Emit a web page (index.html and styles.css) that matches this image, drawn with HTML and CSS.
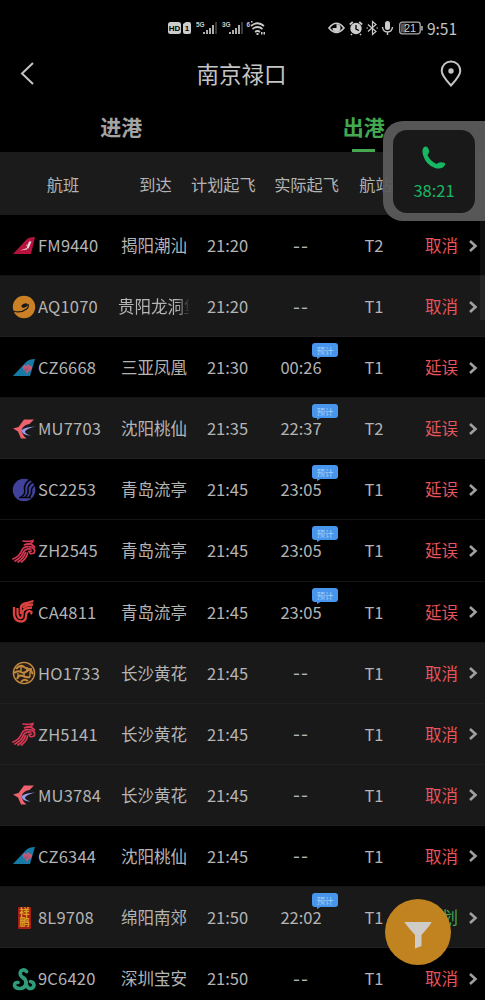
FILE: index.html
```
<!DOCTYPE html>
<html lang="zh-CN">
<head>
    <meta charset="utf-8">
    <title>南京禄口</title>
    <link rel="stylesheet" href="styles.css">
</head>
<body>
    <!-- airline logos -->
    <svg class="defs">
        <symbol id="fm" viewBox="0 0 24 24">
            <path d="M1 20L15 5Q17 3 23 3L19 20Z" fill="#b5123e"/>
            <path d="M17 7.500h2.500l-3 7h-2zM8 16.500l7-2.500v1.500z" fill="#ecd8de"/>
            <path d="M14 11.500l4-1" stroke="#ecd8de" stroke-width=".7"/>
        </symbol>
        <symbol id="aq" viewBox="0 0 24 24">
            <circle cx="12" cy="12" r="11.200" fill="#cc8025"/>
            <ellipse cx="12.500" cy="10.500" rx="3.200" ry="1.800" transform="rotate(-25 12.500 10.500)" fill="#191919"/>
            <path d="M1 16Q9 18.500 14.500 14Q17 12 16 9" fill="none" stroke="#191919" stroke-width="1.300"/>
        </symbol>
        <symbol id="cz" viewBox="0 0 24 24">
            <path d="M1 20L14 6Q17 3 23 3L18 20Z" fill="#1779a5"/>
            <path d="M14.500 18l-.5-3-2.500-1-1-3 2-2 2 1 1.500-2 1.500 2 2-.5.500 2.500-1.500 2.500-2 1z" fill="#c55d78"/>
            <path d="M13 11l1.500 3 2.500-3.500M12 13l3 1.500 3-2" fill="none" stroke="#804a72" stroke-width=".6"/>
        </symbol>
        <symbol id="mu" viewBox="0 0 24 24">
            <path d="M22 2.500H12L6.500 10L1 11.500L6 14.500L9 21.500H14.500Q8 16 10.500 11Q13 7.500 17.500 7Z" fill="#ed626c"/>
            <path d="M23.500 9.500Q12 10 9.500 13.500Q10.500 18.500 19 18.500Q13 17 13 14.500Q15 11.500 23.500 9.500Z" fill="#989be8"/>
        </symbol>
        <symbol id="sc" viewBox="0 0 24 24">
            <circle cx="12" cy="12" r="11.300" fill="#40419a"/>
            <g fill="none" stroke="#05050b" stroke-width="1.500">
                <path d="M9 19Q14 16 12.500 11Q12 5 18 2M13 19Q17 16 16 12Q15.500 7 21 4M17 19Q20 16 19.500 13Q19 10 23 7"/>
                <path d="M7 19.500H19"/>
            </g>
        </symbol>
        <symbol id="zh" viewBox="0 0 24 24">
            <g fill="none" stroke="#d83754" stroke-width="1.700" stroke-linecap="round">
                <path d="M11 2Q16 3 21 1.500Q21 5 12 6Q19 3 22.500 8"/>
                <path d="M1 20Q8 17 10 11Q12 6.500 20 8Q24 11 22 14Q18 16 17 12.500L19.500 12"/>
                <path d="M3 22Q10 18 11.500 13Q13 9.500 19 10M6 23Q12 19 13.500 13.500M9.500 23Q15 19 15.500 14"/>
            </g>
        </symbol>
        <symbol id="ca" viewBox="0 0 24 24">
            <g fill="none" stroke="#dc423f" stroke-width="2.300">
                <path d="M2 7V15Q3 21.500 9.500 21.500Q14 21 14 16Q14 11 18 11Q21 12 18.500 14"/>
                <path d="M5.500 8V14Q6 18 8.500 18Q11 18 10.500 13Q10.500 8 20 7.500"/>
                <path d="M8.800 14V8Q9 4 15 3L21.500 1M11 8Q14 4.500 21 4.500"/>
            </g>
        </symbol>
        <symbol id="ho" viewBox="0 0 24 24">
            <circle cx="12" cy="12" r="10.600" fill="#2b2015" stroke="#c48a40" stroke-width="1.400"/>
            <g fill="none" stroke="#c48a40" stroke-width="2">
                <path d="M4 8Q8 3 12 6T20 8M2 12Q6 9 9 11T15 10T21 13M5 18Q7 13 11 15T18 16M9 21Q12 17 16 20"/>
                <path d="M9 5v5M15 6v5M6 12v4M12 11v5M18 11v5" stroke-width="1.400"/>
            </g>
        </symbol>
        <symbol id="arrow" viewBox="0 0 10 14">
            <path d="M2 2l5.500 5L2 12" fill="none" stroke="#a0a0a0" stroke-width="2.600"/>
        </symbol>
        <symbol id="cq" viewBox="0 0 24 24">
            <g fill="none" stroke="#2e9c7b" stroke-width="3.600" stroke-linecap="round">
                <path d="M14.500 4.500Q12 1.500 9 4Q7 7.500 10 10Q14.500 12 14 16.500Q13 21 8.500 21.500Q3.500 22 2.500 18.500Q2.500 15 6 15.500"/>
                <path d="M14 15Q14 20 17.500 21.500Q21 22 22 18.500Q22 15 18.500 14.500"/>
            </g>
        </symbol>
    </svg>

    <div class="status">
        <div class="left">
            <svg width="100" height="18" viewBox="0 0 100 18">
                <rect x="0" y="3" width="13" height="12" rx="2.500" fill="#ccc"/>
                <text x="6.500" y="12.300" class="hd">HD</text>
                <path d="M15 5l3-2h3q2 0 2 2v8q0 2-2 2h-4q-2 0-2-2z" fill="#ccc"/>
                <text x="19" y="12.300" class="hd">1</text>
                <text x="28" y="7.500" class="net">5G</text>
                <path d="M36 15v-2M39 15v-4M42 15V9M45 15V6" stroke="#ccc" stroke-width="1.700"/>
                <path d="M48 15V3M74 15V3" stroke="#444" stroke-width="1.700"/>
                <text x="54" y="7.500" class="net">3G</text>
                <path d="M62 15v-2M65 15v-4M68 15V9M71 15V6" stroke="#ccc" stroke-width="1.700"/>
                <text x="78.500" y="7.500" class="net">6</text>
                <path d="M83 7Q89.500 1.500 96 7M84.500 10q5-4 10 0M87 13q2.500-2 5 0" fill="none" stroke="#ccc" stroke-width="1.700"/>
                <path d="M88.500 14h2v2h-2zM93 13h1.500v2.500H93zM95.500 13H97v2.500h-1.500zM83 2h1.500v1.500H83z" fill="#ccc"/>
            </svg>
        </div>
        <div class="right">
            <svg width="97" height="18" viewBox="0 0 97 18">
                <path d="M1 9Q8.500-.5 16 9Q8.500 18 1 9Z" fill="none" stroke="#ccc" stroke-width="1.600"/>
                <path d="M8.500 5a4 4 0 1 1-4 4h4z" fill="#ccc"/>
                <circle cx="28" cy="9.500" r="5.700" fill="#ccc"/>
                <path d="M21.800 5.500l3-2.500M34.200 5.500l-3-2.500M24 15l-1 1M32 15l1 1" stroke="#ccc" stroke-width="1.700"/>
                <path d="M28 6v4l3 1.500" fill="none" stroke="#000" stroke-width="1.300"/>
                <path d="M40 5.500l8 7-3.500 3v-13l3.500 3-8 7M38.500 9h1.500M48.500 9h1.500" fill="none" stroke="#ccc" stroke-width="1.200"/>
                <rect x="57" y="2" width="5" height="9" rx="2.500" fill="#ccc"/>
                <path d="M54.500 8q.5 5 5 5t5-5M59.500 13v3" fill="none" stroke="#ccc" stroke-width="1.400"/>
                <rect x="71.700" y="3.200" width="20.500" height="11.600" rx="2.500" fill="none" stroke="#aaa" stroke-width="1.300"/>
                <rect x="73" y="4.500" width="5" height="9" fill="#555"/>
                <path d="M94 7v4.500" stroke="#bbb" stroke-width="1.500"/>
                <text x="82" y="13" class="batt">21</text>
            </svg>
            <span>9:51</span>
        </div>
    </div>

    <div class="title">
        <svg width="16" height="24" viewBox="0 0 16 24"><path d="M13 1L2 11.500l11 10.500" fill="none" stroke="#c4c4c4" stroke-width="2"/></svg>
        <h1>南京禄口</h1>
        <svg width="22" height="28" viewBox="0 0 22 28">
            <path d="M11 25.500Q1.700 15.500 1.700 10.700a9.300 9.300 0 0 1 18.600 0Q20.300 15.500 11 25.500Z" fill="none" stroke="#c4c4c4" stroke-width="2"/>
            <circle cx="11" cy="11" r="2.700" fill="#c4c4c4"/>
        </svg>
    </div>

    <div class="tabs">
        <div class="tab">进港</div>
        <div class="tab on">出港</div>
    </div>

    <div class="head">
        <span>航班</span><span>到达</span><span>计划起飞</span><span>实际起飞</span><span>航站楼</span>
    </div>

    <div class="list">
        <div class="row">
            <div class="no"><svg><use href="#fm"/></svg>FM9440</div>
            <div>揭阳潮汕</div><div>21:20</div><div class="none">--</div><div>T2</div>
            <div class="red">取消</div><svg class="go"><use href="#arrow"/></svg>
        </div>
        <div class="row gray">
            <div class="no"><svg><use href="#aq"/></svg>AQ1070</div>
            <div class="long">贵阳龙洞堡</div><div>21:20</div><div class="none">--</div><div>T1</div>
            <div class="red">取消</div><svg class="go"><use href="#arrow"/></svg>
        </div>
        <div class="row">
            <div class="no"><svg><use href="#cz"/></svg>CZ6668</div>
            <div>三亚凤凰</div><div>21:30</div><div class="real">00:26<b>预计</b></div><div>T1</div>
            <div class="red">延误</div><svg class="go"><use href="#arrow"/></svg>
        </div>
        <div class="row gray">
            <div class="no"><svg><use href="#mu"/></svg>MU7703</div>
            <div>沈阳桃仙</div><div>21:35</div><div class="real">22:37<b>预计</b></div><div>T2</div>
            <div class="red">延误</div><svg class="go"><use href="#arrow"/></svg>
        </div>
        <div class="row">
            <div class="no"><svg><use href="#sc"/></svg>SC2253</div>
            <div>青岛流亭</div><div>21:45</div><div class="real">23:05<b>预计</b></div><div>T1</div>
            <div class="red">延误</div><svg class="go"><use href="#arrow"/></svg>
        </div>
        <div class="row">
            <div class="no"><svg><use href="#zh"/></svg>ZH2545</div>
            <div>青岛流亭</div><div>21:45</div><div class="real">23:05<b>预计</b></div><div>T1</div>
            <div class="red">延误</div><svg class="go"><use href="#arrow"/></svg>
        </div>
        <div class="row">
            <div class="no"><svg><use href="#ca"/></svg>CA4811</div>
            <div>青岛流亭</div><div>21:45</div><div class="real">23:05<b>预计</b></div><div>T1</div>
            <div class="red">延误</div><svg class="go"><use href="#arrow"/></svg>
        </div>
        <div class="row gray">
            <div class="no"><svg><use href="#ho"/></svg>HO1733</div>
            <div>长沙黄花</div><div>21:45</div><div class="none">--</div><div>T1</div>
            <div class="red">取消</div><svg class="go"><use href="#arrow"/></svg>
        </div>
        <div class="row gray">
            <div class="no"><svg><use href="#zh"/></svg>ZH5141</div>
            <div>长沙黄花</div><div>21:45</div><div class="none">--</div><div>T1</div>
            <div class="red">取消</div><svg class="go"><use href="#arrow"/></svg>
        </div>
        <div class="row gray">
            <div class="no"><svg><use href="#mu"/></svg>MU3784</div>
            <div>长沙黄花</div><div>21:45</div><div class="none">--</div><div>T1</div>
            <div class="red">取消</div><svg class="go"><use href="#arrow"/></svg>
        </div>
        <div class="row">
            <div class="no"><svg><use href="#cz"/></svg>CZ6344</div>
            <div>沈阳桃仙</div><div>21:45</div><div class="none">--</div><div>T1</div>
            <div class="red">取消</div><svg class="go"><use href="#arrow"/></svg>
        </div>
        <div class="row gray">
            <div class="no"><span class="seal">祥<br>鹏</span>8L9708</div>
            <div>绵阳南郊</div><div>21:50</div><div class="real">22:02<b>预计</b></div><div>T1</div>
            <div class="green">计划</div><svg class="go"><use href="#arrow"/></svg>
        </div>
        <div class="row">
            <div class="no"><svg><use href="#cq"/></svg>9C6420</div>
            <div>深圳宝安</div><div>21:50</div><div class="none">--</div><div>T1</div>
            <div class="red">取消</div><svg class="go"><use href="#arrow"/></svg>
        </div>
    </div>

    <!-- floating call window -->
    <div class="call">
        <div class="inner">
            <svg width="24" height="24" viewBox="0 0 24 24">
                <path d="M2 1Q5-.5 6.500 3Q8 6 5.500 9Q8 15 14.500 18Q17 15.500 21 16.500Q24 17 23 19Q20 24 13 22Q4 19 1 9Q-.5 3 2 1Z" fill="#17b862"/>
            </svg>
            <span>38:21</span>
        </div>
    </div>

    <div class="filter">
        <svg width="28" height="28" viewBox="0 0 28 28"><path d="M.5 1h27q-1 3-10 13v11L11 27.500V14Q2 4 .5 1Z" fill="#cfcbc6"/></svg>
    </div>
    <div class="bar"></div>
</body>
</html>
```

FILE: styles.css
```
*{
    box-sizing: border-box;
}
body{
    margin: 0;
    height: 1000px;
    overflow: hidden;
    background: #000;
    color: #b4b4b4;
    font-family: "Noto Sans CJK SC", sans-serif;
    font-size: 16.5px;
    position: relative;
}
svg{
    display: block;
}
.defs{
    position: absolute;
    width: 0;
    height: 0;
}
.status{
    display: flex;
    justify-content: space-between;
    height: 50px;
    padding: 19px 28px 0 168px;
}
.right{
    display: flex;
    gap: 2px;
    font-size: 15.5px;
    line-height: 18px;
    color: #c4c4c4;
}
.hd{
    font: bold 8px "Liberation Sans", sans-serif;
    text-anchor: middle;
    fill: #000;
}
.net{
    font: bold 6.5px "Liberation Sans", sans-serif;
    fill: #ccc;
}
.batt{
    font: 11px "Liberation Sans", sans-serif;
    text-anchor: middle;
    fill: #ccc;
}
.title{
    display: flex;
    justify-content: space-between;
    align-items: center;
    height: 48px;
    padding: 0 23px 0 20px;
}
h1{
    margin: 0 0 0 7px;
    font-size: 22.5px;
    font-weight: normal;
    line-height: 32px;
    color: #c4c4c4;
    padding-bottom: 2px;
}
.tabs{
    display: flex;
    height: 54px;
}
.tab{
    width: 50%;
    position: relative;
    text-align: center;
    font-size: 21px;
    font-weight: bold;
    line-height: 57px;
    color: #a4a4a4;
}
.on{
    color: #43a850;
}
.on:after{
    content: "";
    position: absolute;
    left: 109px;
    bottom: 0;
    width: 23px;
    height: 3px;
    background: #43a850;
}
.head{
    display: grid;
    grid-template-columns: 119px 73px 62px 105px 49px;
    height: 63px;
    line-height: 64px;
    background: #1b1b1b;
    font-size: 16.2px;
    text-align: center;
    white-space: nowrap;
}
.head span:first-child{
    padding-left: 7px;
}
.head span:nth-child(3){
    margin-left: -1px;
}
.row{
    display: grid;
    grid-template-columns: 118px 72px 75px 72px 74px 61px 13px;
    align-items: center;
    height: 61.1px;
    line-height: 61px;
    border-bottom: 1px solid #141414;
    text-align: center;
    white-space: nowrap;
}
.gray{
    background: #191919;
    border-color: #202020;
}
.no{
    display: flex;
    align-items: center;
    gap: 2px;
    padding-left: 12px;
    letter-spacing: .2px;
}
.no svg{
    width: 24px;
    height: 24px;
}
.seal{
    flex: none;
    width: 13px;
    height: 22px;
    margin: 0 5px 0 6px;
    border-radius: 1px;
    background: #a51d18;
    color: #d9a224;
    font-size: 10.5px;
    font-weight: bold;
    line-height: 10.5px;
    letter-spacing: 0;
}
.none{
    font-size: 20px;
    line-height: 58px;
    letter-spacing: 1px;
    padding-bottom: 2px;
}
.long{
    overflow: hidden;
    text-align: left;
    -webkit-mask-image: linear-gradient(to right, #000 82%, transparent);
    mask-image: linear-gradient(to right, #000 82%, transparent);
}
.real{
    position: relative;
}
.real b{
    position: absolute;
    left: 47px;
    top: 6px;
    width: 26px;
    height: 14px;
    border-radius: 3px;
    background: #4795ec;
    color: #a9cdf5;
    font-size: 8.5px;
    font-weight: normal;
    line-height: 14px;
}
.real b:after{
    content: "";
    position: absolute;
    left: 5px;
    top: 13px;
    border-top: 3px solid #4795ec;
    border-right: 5px solid transparent;
}
.red{
    color: #e5555d;
}
.green{
    color: #43a850;
}
.go{
    width: 10px;
    height: 14px;
    margin-left: -4px;
}
.call{
    position: absolute;
    left: 383px;
    top: 121px;
    width: 102px;
    height: 100px;
    padding: 9px 10px;
    border-radius: 20px 0 0 20px;
    background: rgba(91, 91, 91, .95);
}
.inner{
    display: flex;
    flex-direction: column;
    align-items: center;
    width: 82px;
    height: 83px;
    padding-top: 16px;
    border-radius: 14px;
    background: #191919;
    color: #17b862;
    font-size: 16.5px;
    line-height: 40px;
}
.filter{
    position: absolute;
    left: 385px;
    top: 899px;
    width: 66px;
    height: 66px;
    padding: 22px 19px;
    border-radius: 50%;
    background: #c0831f;
}
.bar{
    position: absolute;
    right: 0;
    top: 221px;
    width: 5px;
    height: 99px;
    background: rgba(255, 255, 255, .06);
}
```
